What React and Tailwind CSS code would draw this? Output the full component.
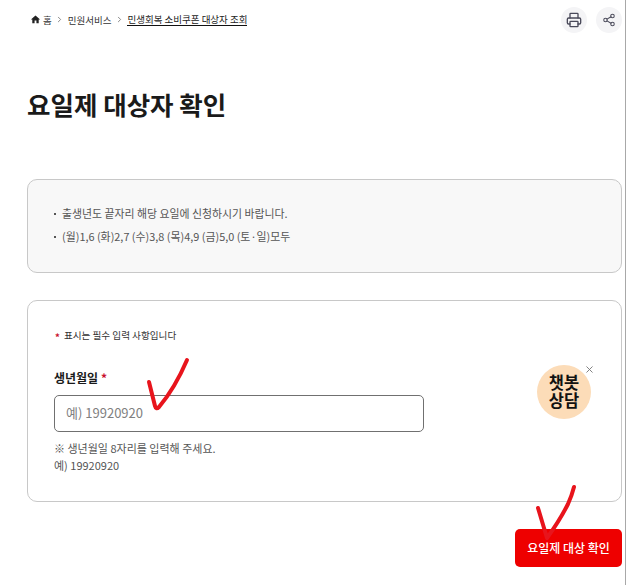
import { ChevronRight, Printer, Share2, X } from 'lucide-react';

const font = { fontFamily: '"Noto Sans CJK KR", sans-serif' };

function Breadcrumb() {
  return (
    <nav className="flex items-center text-[9.5px] leading-[12px] text-[#333]">
      <svg width="11" height="11" viewBox="0 0 24 24" fill="#222" className="mr-[2px]">
        <path d="M10 20v-6h4v6h5v-8h3L12 3 2 12h3v8z" />
      </svg>
      <span>홈</span>
      <ChevronRight size={9} className="mx-[3.5px] text-[#666]" />
      <span>민원서비스</span>
      <ChevronRight size={9} className="mx-[3.5px] text-[#666]" />
      <span className="border-b border-[#111] text-[#222]">민생회복 소비쿠폰 대상자 조회</span>
    </nav>
  );
}

function RoundIcon({ children }) {
  return (
    <div className="w-[26px] h-[26px] rounded-full bg-[#f4f4f6] flex items-center justify-center text-[#4a4a5a]">
      {children}
    </div>
  );
}

function Bullet({ children }) {
  return (
    <p className="flex items-center">
      <span className="w-[2px] h-[2px] ml-[1px] mr-[6px] bg-[#555]" />
      {children}
    </p>
  );
}

function Check({ className, size, d }) {
  return (
    <svg
      className={`absolute pointer-events-none ${className}`}
      width={size}
      height={size}
      viewBox={`0 0 ${size} ${size}`}
      fill="none"
    >
      <path d={d} stroke="#e8141c" strokeWidth="4" strokeLinecap="round" strokeLinejoin="round" />
    </svg>
  );
}

export default function App() {
  return (
    <div className="relative w-[626px] h-[585px] bg-white overflow-hidden border-r border-[#a8a8a8]" style={font}>
      <div className="pl-[27px] pr-[3px]">
        <header className="flex items-center justify-between h-[38px] pt-[1px]">
          <div className="pl-[3px]"><Breadcrumb /></div>
          <div className="flex gap-[9px]">
            <RoundIcon><Printer size={16} strokeWidth={2} /></RoundIcon>
            <RoundIcon><Share2 size={14} strokeWidth={1.8} /></RoundIcon>
          </div>
        </header>

        <h1 className="mt-[46px] text-[25.5px] leading-[40px] font-bold text-[#1a1a1a]">요일제 대상자 확인</h1>

        <section className="mt-[55px] h-[94px] rounded-[10px] border border-[#c8c8c8] bg-[#f8f8f8] pl-[25px] pb-[2px] flex flex-col justify-center gap-[8px] text-[10.9px] leading-[15px] text-[#555]">
          <Bullet>출생년도 끝자리 해당 요일에 신청하시기 바랍니다.</Bullet>
          <Bullet>(월)1,6 (화)2,7 (수)3,8 (목)4,9 (금)5,0 (토·일)모두</Bullet>
        </section>

        <section className="mt-[27px] h-[202px] rounded-[10px] border border-[#c8c8c8] pl-[26px] pt-[27px]">
          <p className="text-[9.6px] leading-[14px] text-[#333]">
            <span className="relative top-[2px] ml-[1px] mr-[4px] text-[#c8102e] font-bold">*</span>표시는 필수 입력 사항입니다
          </p>
          <label className="block mt-[27px] text-[12px] leading-[18px] font-bold text-[#1a1a1a]">
            생년월일 <span className="text-[#c8102e]">*</span>
          </label>
          <div className="mt-[8px] w-[370px] h-[37px] rounded-[5px] border border-[#707070] flex items-center pl-[11px] pb-[1px] text-[13px] text-[#808080]">
            예) 19920920
          </div>
          <div className="mt-[8px] text-[11px] leading-[17px] text-[#555]">
            <p>※ 생년월일 8자리를 입력해 주세요.</p>
            <p>예) 19920920</p>
          </div>
        </section>

        <div className="mt-[27px] flex justify-end">
          <button className="w-[107px] h-[38px] rounded-[5px] bg-[#ee0000] text-white text-[12px] font-medium">요일제 대상 확인</button>
        </div>
      </div>

      {/* chatbot bubble */}
      <div className="absolute left-[537px] top-[365px] w-[54px] h-[54px] rounded-full bg-[#fcdcb8] flex items-center justify-center pb-[2px] text-center text-[16.5px] leading-[18px] font-bold text-[#111]">
        챗봇<br />상담
      </div>
      <X size={11} strokeWidth={2} className="absolute left-[584px] top-[364px] text-[#777]" />

      {/* hand drawn marks */}
      <Check size={70} className="left-[130px] top-[350px]" d="M19 32 L25 56 Q26 60 29 57 Q45 38 57 10" />
      <Check size={60} className="left-[530px] top-[480px]" d="M8 28 L17 58 Q30 40 38 24 Q42 15 44 7" />
    </div>
  );
}
